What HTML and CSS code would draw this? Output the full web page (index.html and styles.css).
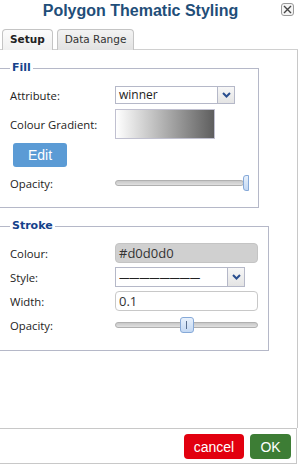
FILE: index.html
```html
<!DOCTYPE html>
<html lang="en">

<head>
    <meta charset="UTF-8">
    <title>Polygon Thematic Styling</title>
    <link rel="stylesheet" href="styles.css">
</head>

<body>
    <div class="dialog">
        <header class="dialog-head">
            <h1>Polygon Thematic Styling</h1>
            <button class="close" title="Close">
                <svg width="9" height="9" viewBox="0 0 9 9">
                    <path d="M1 1 L8 8 M8 1 L1 8" stroke="#444" stroke-width="1.4" />
                </svg>
            </button>
        </header>

        <ul class="tabs">
            <li class="tab active">Setup</li>
            <li class="tab">Data Range</li>
        </ul>

        <main class="body">
            <fieldset class="group fill">
                <legend>Fill</legend>
                <div class="row">
                    <label>Attribute:</label>
                    <div class="select">
                        <span class="value">winner</span>
                        <span class="trigger"><svg width="9" height="6" viewBox="0 0 9 6"><path d="M1 1 L4.5 4.5 L8 1" stroke="#2a4f8f" stroke-width="2" fill="none" /></svg></span>
                    </div>
                </div>
                <div class="row tall">
                    <label>Colour Gradient:</label>
                    <div class="gradient"></div>
                </div>
                <div class="row btn-row">
                    <button class="edit">Edit</button>
                </div>
                <div class="row slim">
                    <label>Opacity:</label>
                    <div class="slider">
                        <div class="track"></div>
                        <div class="thumb end"></div>
                    </div>
                </div>
            </fieldset>

            <fieldset class="group stroke">
                <legend>Stroke</legend>
                <div class="row">
                    <label>Colour:</label>
                    <div class="field colour">#d0d0d0</div>
                </div>
                <div class="row">
                    <label>Style:</label>
                    <div class="select style">
                        <span class="value">————————</span>
                        <span class="trigger"><svg width="9" height="6" viewBox="0 0 9 6"><path d="M1 1 L4.5 4.5 L8 1" stroke="#2a4f8f" stroke-width="2" fill="none" /></svg></span>
                    </div>
                </div>
                <div class="row">
                    <label>Width:</label>
                    <div class="field">0.1</div>
                </div>
                <div class="row">
                    <label>Opacity:</label>
                    <div class="slider">
                        <div class="track"></div>
                        <div class="thumb mid"></div>
                    </div>
                </div>
            </fieldset>
        </main>

        <footer class="dialog-foot">
            <button class="cancel">cancel</button>
            <button class="ok">OK</button>
        </footer>
    </div>
</body>

</html>
```

FILE: styles.css
```css
/* General Reset */
* {
    margin: 0;
    padding: 0;
    box-sizing: border-box;
}

body {
    font-family: "DejaVu Sans", Verdana, sans-serif;
    font-size: 11px;
    color: #222;
    background: #fff;
}

.dialog {
    width: 298px;
    height: 466px;
    display: flex;
    flex-direction: column;
}

/* Header */
.dialog-head {
    display: flex;
    align-items: flex-start;
    height: 27px;
}

.dialog-head h1 {
    flex: 1;
    text-align: center;
    font-family: "Liberation Sans", Arial, sans-serif;
    font-size: 16px;
    font-weight: bold;
    color: #1f4e79;
    line-height: 20px;
    padding-top: 1px;
}

.close {
    width: 13px;
    height: 13px;
    margin: 3px 4px 0 0;
    border: 1px solid #999;
    border-radius: 3px;
    background: #f4f4f4;
    display: flex;
    align-items: center;
    justify-content: center;
}

/* Tabs */
.tabs {
    display: flex;
    list-style: none;
    padding-left: 2px;
    gap: 4px;
    margin-top: 2px;
    border-bottom: 1px solid #d0d0d0;
}

.tab {
    height: 21px;
    line-height: 19px;
    padding: 0 7px;
    font-size: 10.5px;
    border: 1px solid #c4c4c4;
    border-bottom: none;
    border-radius: 4px 4px 0 0;
    background: linear-gradient(#f3f3f3, #e2e2e2);
    color: #333;
    margin-bottom: -1px;
}

.tab.active {
    background: linear-gradient(#fcfcfc, #f0f0f0);
    font-weight: bold;
    color: #222;
    padding: 0 7px;
}

/* Body */
.body {
    flex: 1;
    border-right: 1px solid #c8c8c8;
    padding-top: 11px;
}

.group {
    border: 1px solid #b5b8c8;
    border-left: none;
    padding: 11px 0 0 10px;
}

.group legend {
    font-weight: bold;
    color: #15428b;
    padding: 0 2px;
    line-height: 14px;
}

.fill {
    width: 259px;
    padding-bottom: 17px;
}

.stroke {
    width: 269px;
    margin-top: 11px;
    padding-top: 10px;
    padding-bottom: 15px;
}

.row {
    display: flex;
    align-items: center;
    height: 20px;
    margin-bottom: 4px;
}

.row label {
    width: 105px;
    font-family: "Open Sans", sans-serif;
    font-size: 11.3px;
    color: #222;
}

.fill .row {
    height: 18px;
    margin-bottom: 5px;
}

.fill .row.tall {
    height: 30px;
    margin-bottom: 4px;
}

.fill .row.btn-row {
    height: 24px;
    margin-bottom: 9px;
    padding-left: 3px;
}

.fill .row.slim {
    height: 14px;
    margin-bottom: 0;
}

.stroke .row:last-child {
    margin-bottom: 0;
}

/* Controls */
.select {
    width: 120px;
    height: 100%;
    display: flex;
    border: 1px solid #b5b8c8;
    background: #fff;
}

.select.style {
    width: 130px;
}

.select .value {
    flex: 1;
    font-family: "Open Sans", sans-serif;
    font-size: 12px;
    line-height: 16px;
    padding-left: 3px;
    white-space: nowrap;
    overflow: hidden;
}

.select.style .value {
    font-size: 10.5px;
    line-height: 18px;
    letter-spacing: -0.4px;
    color: #222;
}

.trigger {
    width: 17px;
    border-left: 1px solid #b5b8c8;
    background: linear-gradient(#f7f7f7, #e4e4e4);
    display: flex;
    align-items: center;
    justify-content: center;
}

.gradient {
    width: 100px;
    height: 30px;
    border: 1px solid #c0c0d0;
    background: linear-gradient(to right, #fff, #5e5e5e);
}

.edit {
    width: 54px;
    height: 24px;
    border: none;
    border-radius: 3px;
    background: #5b9bd5;
    color: #fff;
    font-family: "Liberation Sans", Arial, sans-serif;
    font-size: 14px;
}

.field {
    width: 143px;
    height: 100%;
    border: 1px solid #c8c8c8;
    border-radius: 4px;
    font-family: "Open Sans", sans-serif;
    font-size: 13px;
    line-height: 18px;
    padding-left: 3px;
    color: #333;
}

.field.colour {
    background: #d0d0d0;
    border-color: #c4c4c4;
}

/* Sliders */
.slider {
    position: relative;
    height: 16px;
    display: flex;
    align-items: center;
}

.fill .slider {
    width: 134px;
}

.stroke .slider {
    width: 143px;
}

.track {
    width: 100%;
    height: 6px;
    border: 1px solid #b0b0b0;
    border-radius: 3px;
    background: linear-gradient(#c8c8c8, #e0e0e0);
}

.fill .track {
    width: 129px;
}

.thumb {
    position: absolute;
    top: 0;
    height: 16px;
    border: 1px solid #86a9d8;
    background: linear-gradient(#e8f1fc, #c3d8f3);
}

.thumb.end {
    left: 128px;
    width: 6px;
    border-radius: 3px 0 0 3px;
}

.thumb.mid {
    left: 65px;
    width: 14px;
    border-radius: 3px;
}

.thumb.mid::after {
    content: "";
    position: absolute;
    left: 5px;
    top: 3px;
    width: 1px;
    height: 8px;
    background: #5a6f8f;
}

/* Footer */
.dialog-foot {
    display: flex;
    justify-content: flex-end;
    gap: 6px;
    height: 36px;
    padding: 5px 5px 0 0;
    border-top: 1px solid #c8c8c8;
    border-right: 1px solid #c8c8c8;
    border-bottom: 1px solid #c8c8c8;
    width: 297px;
    margin-bottom: 2px;
}

.dialog-foot button {
    height: 25px;
    border: none;
    border-radius: 4px;
    color: #fff;
    font-family: "Liberation Sans", Arial, sans-serif;
    font-size: 14px;
}

.cancel {
    width: 60px;
    background: #e2000f;
}

.ok {
    width: 41px;
    background: #3d7d35;
}
```
